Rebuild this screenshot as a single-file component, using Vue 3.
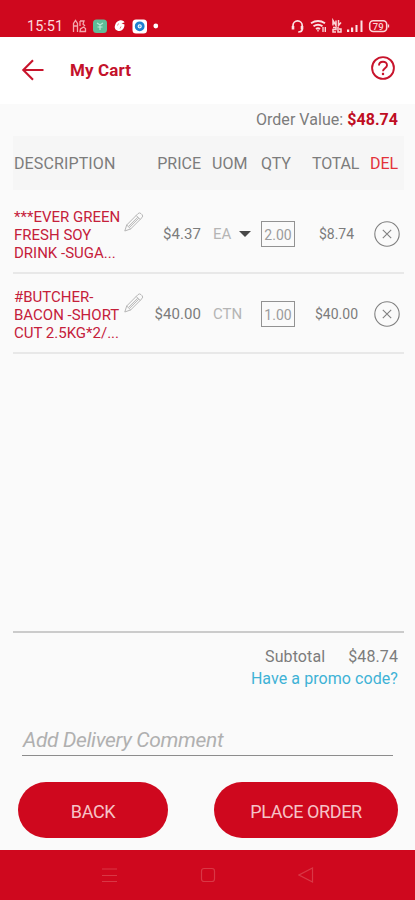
<script setup>
const items = [
  { lines: ['***EVER GREEN', 'FRESH SOY', 'DRINK -SUGA...'], price: '$4.37', uom: 'EA', select: true, qty: '2.00', total: '$8.74' },
  { lines: ['#BUTCHER-', 'BACON -SHORT', 'CUT 2.5KG*2/...'], price: '$40.00', uom: 'CTN', select: false, qty: '1.00', total: '$40.00' },
]
</script>

<template>
  <div class="screen">
    <div class="status">
      <span class="time">15:51</span>
      <svg class="s-left" width="90" height="16" viewBox="0 0 90 16">
        <g fill="none" stroke="#f3a9ae" stroke-width="1.3">
          <path d="M1.5 14V5.500l2-3 2 3V14M1.500 8h4M8 3v5M8 3h4l-1 3 2 2M8 13.500h5.500v-3l-2-1.500-3 2z" />
        </g>
        <rect x="21" y="1.500" width="14" height="13.500" rx="3.500" fill="#5fbd98" />
        <path d="M25 5l3 2 3-2M28 7v5M25.500 9h5" fill="none" stroke="#b9ead6" stroke-width="1.200" />
        <path d="M47.500 2.500c2-.8 4.500.3 5 2l-3 .8 3 1.200c0 3-1.500 6-5 6.500-3.500 0-5.500-2.500-4.500-5.500.5-2.500 2-4.500 4.500-5z" fill="#fff" />
        <path d="M46.500 5.500l-1 2M49 8.500l-1 2" stroke="#e88088" stroke-width="1" />
        <rect x="60.500" y="1.500" width="14.500" height="14" rx="3.500" fill="#fff" />
        <circle cx="67.700" cy="8.300" r="3.500" fill="#fff" stroke="#1f7fd0" stroke-width="2.800" />
        <circle cx="67.700" cy="8.300" r="1.100" fill="#5da9e3" />
        <circle cx="83.800" cy="8" r="2.400" fill="#fff" />
      </svg>
      <svg class="s-right" width="100" height="16" viewBox="0 0 100 16">
        <g fill="none" stroke="#fbe3e5" stroke-width="1.700">
          <path d="M3 10V7.500a4.600 4.600 0 0 1 9.200 0V11q0 3-4 3" />
          <path d="M3 8v3.500M12 8v3.500" stroke-width="2.600" />
          <path d="M21 5.200q7-4.500 14 0M23.500 8.200q4.500-3 9 0M26 11q2-1.500 4 0" stroke-width="1.900" />
          <path d="M28 12v1.500M33 9v5M35.300 9v5" stroke-width="1.300" />
        </g>
        <g fill="none" stroke="#fbd5d7" stroke-width="1.500">
          <path d="M43 7.500v-5l3 5v-5M48.500 2v5.500l2.500-3M43 9.500h3v2h-3v2.500h3M48 9v5h3v-3h-2" />
        </g>
        <path d="M57 11.500h2.200V14H57zM61 9.500h2.200V14H61zM65.500 7h2V14h-2zM70.500 2.500h2V14h-2z" fill="#fbe3e5" />
        <rect x="79.700" y="2.700" width="17" height="10.800" rx="3.500" fill="none" stroke="#fbd5d7" stroke-width="1.600" />
        <path d="M98.500 6.500v3" fill="none" stroke="#fbd5d7" stroke-width="1.300" />
        <text class="battery" x="88.200" y="11.500" text-anchor="middle">79</text>
      </svg>
    </div>

    <header class="appbar">
      <svg class="arrow" width="24" height="24" viewBox="0 0 24 24">
        <path d="M22.500 11H2.500M12 1.300L2.300 11l9.700 9.700" fill="none" stroke="#c8142c" stroke-width="2.100" />
      </svg>
      <h1>My Cart</h1>
      <svg class="help" width="26" height="26" viewBox="0 0 26 26" fill="none" stroke="#c8142c" stroke-width="1.900">
        <circle cx="13" cy="13" r="10.900" />
        <path d="M9 10.500c0-5 8-5 8-.3 0 2.900-4 3.100-4 6" />
        <path d="M13 17.800v2.300" stroke-width="2.200" />
      </svg>
    </header>

    <main>
      <div class="order">Order Value:&nbsp;<b>$48.74</b></div>

      <div class="row head">
        <span class="h-desc">DESCRIPTION</span>
        <span class="h-price">PRICE</span>
        <span class="h-uom">UOM</span>
        <span class="h-qty">QTY</span>
        <span class="h-total">TOTAL</span>
        <span class="h-del">DEL</span>
      </div>

      <div v-for="item in items" :key="item.uom" class="row item">
        <div class="desc"><div v-for="l in item.lines" :key="l">{{ l }}</div></div>
        <svg class="pencil" width="20" height="20" viewBox="0 0 20 20" fill="none" stroke="#b5b5b5" stroke-width="1">
          <path d="M.8 19l1.900-6L14 1.600q1.500-1.400 3 0l1 1q1.400 1.500 0 3L6.700 16.900zM2.700 13l4 3.900M12.200 3.500l4 4M4.700 14.200l9-9M5.700 15.200l9-9" />
        </svg>
        <span class="price">{{ item.price }}</span>
        <span class="uom">{{ item.uom }}<i v-if="item.select" class="caret"></i></span>
        <span class="qty">{{ item.qty }}</span>
        <span class="total">{{ item.total }}</span>
        <svg class="del" width="26" height="26" viewBox="0 0 26 26" fill="none" stroke="#808080" stroke-width="1.100">
          <circle cx="13" cy="13" r="12.200" />
          <path d="M8.800 8.800l8.400 8.400M17.200 8.800l-8.400 8.400" />
        </svg>
      </div>

      <div class="summary">
        <div class="subtotal"><span>Subtotal</span><span>$48.74</span></div>
        <div class="promo">Have a promo code?</div>
      </div>

      <div class="comment">Add Delivery Comment</div>

      <div class="actions">
        <button class="back">BACK</button>
        <button class="place">PLACE ORDER</button>
      </div>
    </main>

    <nav class="nav">
      <svg width="16" height="16" viewBox="0 0 16 16"><path d="M0 2h15M0 8.500h15M0 14.500h15" /></svg>
      <svg width="16" height="16" viewBox="0 0 16 16"><rect x="1.500" y="1.500" width="13" height="13" rx="2.500" /></svg>
      <svg width="16" height="16" viewBox="0 0 16 16"><path d="M14.500 1v14L1 8z" /></svg>
    </nav>
  </div>
</template>

<style>
body { background: #fafafa; }
</style>

<style scoped>
* { box-sizing: border-box; }
.screen {
  width: 415px;
  height: 900px;
  display: flex;
  flex-direction: column;
  background: #fafafa;
  font-family: Roboto, "Liberation Sans", sans-serif;
  color: #7c7c7c;
  overflow: hidden;
  white-space: nowrap;
}
.status {
  height: 37px;
  flex: none;
  background: #cf081e;
  display: flex;
  align-items: flex-start;
  padding: 18px 17px 0 27px;
}
.time { width: 45px; color: #fbdadd; font-size: 14.5px; line-height: 17px; }
.battery { font-size: 9.5px; font-weight: 500; fill: #fbd5d7; }
.s-right { margin-left: auto; margin-right: 8px; width: 100px; }
.appbar {
  height: 67px;
  flex: none;
  background: #fff;
  display: flex;
  align-items: center;
  padding: 0 19px 0 21px;
}
h1 { margin: -2px 0 0 25px; font-size: 17px; line-height: 20px; font-weight: 700; color: #c4122b; letter-spacing: 0.1px; }
.help { margin-left: auto; margin-bottom: 6px; }
main { flex: 1; display: flex; flex-direction: column; padding: 0 11px 0 13px; }
.order {
  height: 32px;
  line-height: 31px;
  font-size: 16px;
  text-align: right;
  padding-right: 6px;
  letter-spacing: 0.04px;
}
.order b { color: #bf0d22; }
.row {
  display: grid;
  grid-template-columns: 112px 24px 52px 11px 49px 34px 17px 49px 9px 34px;
  align-items: center;
}
.head { height: 54px; background: #f6f6f6; font-size: 16px; }
.h-desc { grid-column: 1 / 3; padding-left: 1px; letter-spacing: 0.12px; }
.h-price { grid-column: 3; justify-self: end; }
.h-uom { grid-column: 5; }
.h-qty { grid-column: 6; }
.h-total { grid-column: 8; letter-spacing: -0.2px; }
.h-del { grid-column: 10; color: #e3323a; }
.item { height: 80px; border-bottom: 2px solid #e8e8e8; font-size: 15px; padding-top: 2px; }
.item:nth-child(3) { height: 84px; padding-top: 5px; }
.desc { padding: 2px 0 0 1px; font-size: 15px; line-height: 18px; color: #c5203a; }
.pencil { align-self: start; margin: 17px 0 0 -1px; }
.price { grid-column: 3; justify-self: end; letter-spacing: 0.05px; }
.uom { grid-column: 5; display: flex; align-items: center; padding-left: 1px; color: #b5b5b5; }
.caret {
  margin-left: 8px;
  border: 6px solid transparent;
  border-top: 6px solid #484848;
  border-bottom: 0;
}
.qty {
  grid-column: 6;
  height: 26px;
  border: 1px solid #929292;
  color: #9c9c9c;
  font-size: 14px;
  line-height: 26px;
  text-align: center;
}
.total { grid-column: 8; justify-self: center; font-size: 14px; }
.del { grid-column: 10; margin-left: 4px; }
.summary {
  margin-top: auto;
  border-top: 2px solid #cbcbcb;
  padding: 13px 6px 0 0;
  text-align: right;
  font-size: 16px;
  line-height: 22px;
}
.subtotal { display: flex; justify-content: flex-end; gap: 23px; letter-spacing: 0.1px; }
.promo { color: #3eb2d6; letter-spacing: 0.07px; }
.comment {
  margin: 34px 11px 0 9px;
  height: 32px;
  line-height: 32px;
  padding-left: 1px;
  border-bottom: 1px solid #8c8c8c;
  font-size: 21px;
  letter-spacing: -0.35px;
  font-style: italic;
  color: #b0b0b0;
}
.actions { display: flex; justify-content: space-between; padding: 26px 6px 12px 5px; }
button {
  height: 56px;
  border: 0;
  border-radius: 28px;
  background: #cf081e;
  color: #f6c3c7;
  font: 400 18px Roboto, "Liberation Sans", sans-serif;
  letter-spacing: -0.4px;
  padding: 2px 0 0;
}
.back { width: 150px; }
.place { width: 184px; }
.nav {
  height: 50px;
  flex: none;
  background: #cf081e;
  display: flex;
  justify-content: center;
  align-items: center;
  gap: 82px;
}
.nav svg { fill: none; stroke: #d93745; stroke-width: 1.200; }
</style>
